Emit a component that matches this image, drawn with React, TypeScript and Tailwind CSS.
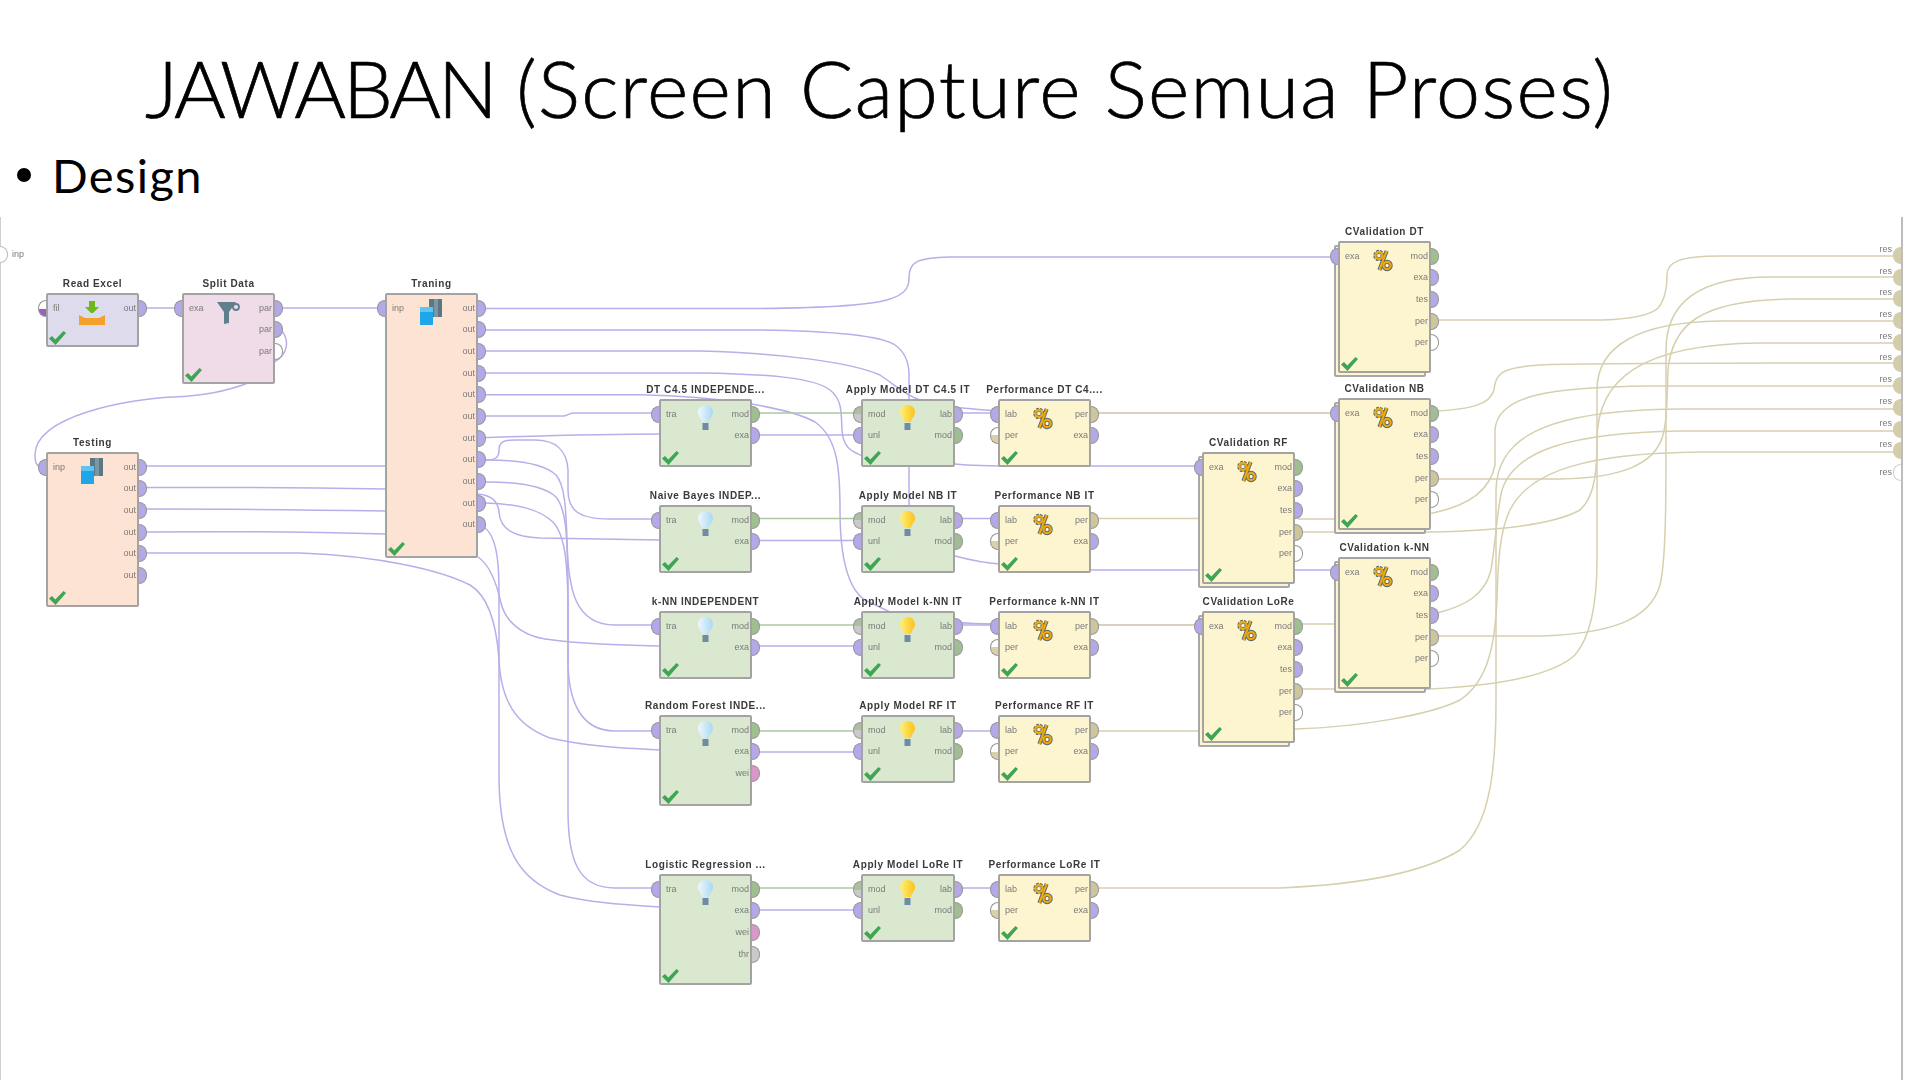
const TOP = 217;

type PortKind = "exa" | "mod" | "per" | "wei" | "thr" | "off" | "modIn" | "perIn" | "fil";

const portFill: Record<PortKind, string> = {
  exa: "bg-[#b5a8e8]",
  mod: "bg-[#9fbf90]",
  per: "bg-[#cdc59b]",
  wei: "bg-[#d898c8]",
  thr: "bg-[#cacaca]",
  off: "bg-white",
  modIn: "bg-[linear-gradient(#a9c29c_50%,#cacaca_50%)]",
  perIn: "bg-[linear-gradient(#ffffff_50%,#d9d0a6_50%)]",
  fil: "bg-[linear-gradient(#ffffff_55%,#9b5fc0_55%)]",
};

type PortDef = [string, PortKind];

interface OpProps {
  x: number;
  y: number;
  w?: number;
  h: number;
  title: string;
  tone: string;
  icon: React.ReactNode;
  ins: PortDef[];
  outs: PortDef[];
  stacked?: boolean;
}

function Check() {
  return (
    <svg className="absolute bottom-[0px] left-[1px]" width="17" height="14" viewBox="0 0 17 14">
      <polygon points="0,7.5 3,5 6.3,8.5 14.5,0 17,2 6.5,14" fill="#3da553" />
    </svg>
  );
}

function Bulb({ lit }: { lit?: boolean }) {
  const id = lit ? "bulb-lit" : "bulb-cold";
  return (
    <svg className="absolute left-[36px] top-[3px]" width="17" height="27" viewBox="0 0 17 27">
      <defs>
        <linearGradient id={id} x1="0" x2="1" y1="0" y2="0">
          <stop offset="0" stopColor={lit ? "#fff07a" : "#eef8fd"} />
          <stop offset="1" stopColor={lit ? "#fbc21a" : "#a9d8f3"} />
        </linearGradient>
      </defs>
      <path d="M8.5 1C4 1 1 4.2 1 8.2c0 3.2 2.2 5 3.2 7.2.4.9.6 1.6.8 2.6h7c.2-1 .4-1.7.8-2.6 1-2.2 3.2-4 3.2-7.2C16 4.2 13 1 8.5 1z" fill={`url(#${id})`} />
      <rect x="5.5" y="19" width="6" height="7" fill="#6f8ba5" />
    </svg>
  );
}

function Percent() {
  return (
    <svg className="absolute left-[33px] top-[6px]" width="20" height="23" viewBox="0 0 22 25">
      <g fill="none" stroke="#55666e" strokeWidth="4.4">
        <circle cx="6.5" cy="7" r="4" strokeDasharray="2.4 0.8" />
        <circle cx="15.5" cy="18" r="4" />
        <path d="M15 2 7 23" />
      </g>
      <g fill="none" stroke="#eea90f" strokeWidth="2.4">
        <circle cx="6.5" cy="7" r="4" />
        <circle cx="15.5" cy="18" r="4" />
        <path d="M15 2 7 23" />
      </g>
    </svg>
  );
}

function Multiply() {
  return (
    <svg className="absolute left-[32px] top-[4px]" width="24" height="26" viewBox="0 0 24 26">
      <path d="M10 0h13v18H10z" fill="#5b7785" />
      <path d="M15 0h4v18h-4z" fill="#7c96a3" />
      <path d="M1 8h13v18H1z" fill="#1fa6e8" />
      <path d="M1 8h13v5H1z" fill="#5cc5f2" />
    </svg>
  );
}

function Funnel() {
  return (
    <svg className="absolute left-[32px] top-[6px]" width="25" height="24" viewBox="0 0 25 24">
      <path d="M1 1h19l-7 10v11l-5 1V11z" fill="#5f7f8c" />
      <circle cx="20" cy="6" r="3" fill="none" stroke="#5f7f8c" strokeWidth="1.8" />
    </svg>
  );
}

function ImportIcon() {
  return (
    <svg className="absolute left-[31px] top-[6px]" width="26" height="25" viewBox="0 0 26 25">
      <path d="M10 0h6v6h4l-7 7-7-7h4z" fill="#6cb91c" />
      <path d="M4 12h18l2 3H2z" fill="#cfe3ea" />
      <path d="M0 14l6 3h14l6-3v10H0z" fill="#f4a02c" />
    </svg>
  );
}

function Op({ x, y, w = 93, h, title, tone, icon, ins, outs, stacked }: OpProps) {
  return (
    <div className="absolute" style={{ left: x - 1, top: y - TOP, width: w, height: h }}>
      {stacked && <div className={`absolute -bottom-[4px] -left-[4px] right-[5px] top-[4px] rounded-[2px] border-2 border-[#a8a8a8] ${tone}`} />}
      <div className={`absolute inset-0 rounded-[2px] border-2 border-[#a3a3a3] ${tone}`}>
        {icon}
        <Check />
      </div>
      <div className="absolute -top-[15px] left-1/2 -translate-x-1/2 whitespace-nowrap text-[10px] font-bold leading-[12px] tracking-[0.6px] text-[#3a3a3a]">
        {title}
      </div>
      <div className="absolute -left-[8px] top-[6.5px] flex flex-col gap-[4.7px]">
        {ins.map(([label, kind], i) => (
          <div key={i} className="flex h-[17px] items-center gap-[7px]">
            <div className={`h-[17px] w-[8px] rounded-l-full border-[1.5px] border-r-0 border-[#979797] ${portFill[kind]}`} />
            <span className="text-[9px] leading-[11px] text-[#7a7a7a]">{label}</span>
          </div>
        ))}
      </div>
      <div className="absolute -right-[8px] top-[6.5px] flex flex-col items-end gap-[4.7px]">
        {outs.map(([label, kind], i) => (
          <div key={i} className="flex h-[17px] items-center gap-[3px]">
            <span className="text-[9px] leading-[11px] text-[#7a7a7a]">{label}</span>
            <div className={`h-[17px] w-[8px] rounded-r-full border-[1.5px] border-l-0 border-[#979797] ${portFill[kind]}`} />
          </div>
        ))}
      </div>
    </div>
  );
}

const PURPLE = [
  "M146 308H175",
  "M282 308H378",
  "M281 330C290 340 288 355 274 362L248 383C225 392 200 396 173 397C130 399 35 415 35 455Q35 465 39 466",
  "M146 466H386",
  "M146 487.5C250 487 320 488 386 489",
  "M146 509C250 509 320 510 386 511",
  "M146 532C250 531 320 532 386 534",
  "M146 553H300C380 556 440 570 470 585C490 597 497 630 499 660C501 700 515 725 550 738C585 746 620 748 660 750",
  "M486 308.5H760C810 308 870 306 890 299C905 294 909 288 909 278C909 262 916 258 950 257H1336",
  "M486 330H760C830 331 880 335 895 345C905 352 909 362 909 375V520C909 545 940 553 955 556C970 560 985 563 1000 564C1040 570 1060 570 1090 570H1335",
  "M486 351H700C780 353 850 362 880 375C895 385 905 395 920 400L955 407C970 409 985 410 998 411",
  "M486 373H700C770 374 815 378 830 390C843 400 841 415 842 430C843 450 855 452 862 456L955 464C975 466 1000 466 1020 466H1196",
  "M486 394.7H640C720 396 790 408 815 422C838 438 840 470 840 510C840 565 850 590 865 600L890 612L955 622C970 624 985 624 998 624",
  "M486 416H564C568 416 568 413 574 413H652",
  "M486 437.5C540 436 600 434 660 434",
  "M486 460C495 460 499 458 499 450C499 443 502 440 515 440H535C555 440 567 450 568 470V490C568 510 578 519 610 519H652",
  "M486 460C520 460 545 465 556 475C565 485 566 510 567 540C568 590 575 625 615 625H652",
  "M486 482C520 482 545 487 556 497C567 510 567 540 568 580V660C568 700 580 731 615 731H652",
  "M486 503C520 504 540 510 553 522C565 535 567 560 568 600V810C568 860 578 888 615 888H652",
  "M478 494C490 495 498 500 499 512C500 530 515 537 540 538L660 540",
  "M484 527C495 535 499 555 499 590V780C500 850 520 880 560 895C590 903 630 905 660 907",
  "M478 557C490 565 497 585 501 603C505 620 520 635 545 639C580 644 620 645 660 646",
  "M757 435H854",
  "M757 540.5H854",
  "M757 646H854",
  "M757 752H854",
  "M757 910H854",
  "M962 413H998",
  "M962 518.5H998",
  "M962 625H998",
  "M962 731H998",
  "M962 888H998",
];

const GREEN = ["M757 413H854", "M757 518.5H854", "M757 625H854", "M757 731H854", "M757 888H854"];

const BROWN = ["M1097 413H1333", "M1097 625H1197"];

const TAN = [
  "M1097 518.5H1204",
  "M1298 519H1335L1433 513C1470 505 1490 490 1495 465V430C1497 395 1550 387 1650 386H1895",
  "M1302 624H1336",
  "M1437 320H1603C1630 319 1650 316 1658 308C1665 300 1667 290 1667 275C1667 262 1680 256 1720 256H1895",
  "M1437 636H1540C1610 634 1650 620 1660 585C1666 560 1666 500 1666 440V350C1666 310 1690 277 1770 277H1895",
  "M1437 479H1560C1620 478 1655 465 1663 435C1667 420 1667 400 1668 370C1672 325 1700 300 1790 299H1895",
  "M1302 532H1430C1480 531 1550 527 1580 510C1595 497 1597 470 1597 440V390C1597 345 1640 322 1720 321H1895",
  "M1302 689H1430C1490 686 1550 678 1575 655C1592 635 1597 600 1597 560V440C1597 380 1640 344 1760 343H1895",
  "M1437 411C1470 409 1490 405 1494 390C1495 375 1500 367 1540 365C1580 363 1700 363 1895 363",
  "M1097 888H1280C1350 885 1420 875 1460 850C1490 825 1496 770 1496 700V490C1497 440 1540 410 1680 409H1895",
  "M1437 613C1465 606 1485 595 1491 570C1496 540 1497 510 1502 490C1515 450 1570 433 1680 431H1895",
  "M1097 731H1200L1295 729C1360 727 1430 715 1460 700C1490 680 1495 640 1497 600C1498 560 1500 530 1510 510C1530 470 1590 453 1700 452H1895",
];

const RES_PORTS = Array.from({ length: 10 }, (_, i) => i);

const GREEN_BOX = "bg-[#d9e8cf]";
const YELLOW_BOX = "bg-[#fdf5d0]";
const PEACH_BOX = "bg-[#fde3d4]";

const elevenOuts: PortDef[] = Array.from({ length: 11 }, () => ["out", "exa"]);
const sixOuts: PortDef[] = Array.from({ length: 6 }, () => ["out", "exa"]);
const applyIns: PortDef[] = [["mod", "modIn"], ["unl", "exa"]];
const applyOuts: PortDef[] = [["lab", "exa"], ["mod", "mod"]];
const perfIns: PortDef[] = [["lab", "exa"], ["per", "perIn"]];
const perfOuts: PortDef[] = [["per", "per"], ["exa", "exa"]];
const cvOuts: PortDef[] = [["mod", "mod"], ["exa", "exa"], ["tes", "exa"], ["per", "per"], ["per", "off"]];

const rows = [
  { y: 400, train: "DT C4.5 INDEPENDE...", apply: "Apply Model DT C4.5 IT", perf: "Performance DT C4....", h: 68, extra: [] as PortDef[] },
  { y: 506, train: "Naive Bayes INDEP...", apply: "Apply Model NB IT", perf: "Performance NB IT", h: 68, extra: [] as PortDef[] },
  { y: 612, train: "k-NN INDEPENDENT", apply: "Apply Model k-NN IT", perf: "Performance k-NN IT", h: 68, extra: [] as PortDef[] },
  { y: 716, train: "Random Forest INDE...", apply: "Apply Model RF IT", perf: "Performance RF IT", h: 91, extra: [["wei", "wei"]] as PortDef[] },
  { y: 875, train: "Logistic Regression ...", apply: "Apply Model LoRe IT", perf: "Performance LoRe IT", h: 111, extra: [["wei", "wei"], ["thr", "thr"]] as PortDef[] },
];

const validations = [
  { x: 1338, y: 241, title: "CValidation DT" },
  { x: 1338, y: 398, title: "CValidation NB" },
  { x: 1338, y: 557, title: "CValidation k-NN" },
  { x: 1202, y: 452, title: "CValidation RF" },
  { x: 1202, y: 611, title: "CValidation LoRe" },
];

function Wires({ paths, color }: { paths: string[]; color: string }) {
  return (
    <g fill="none" stroke={color} strokeWidth="1.5">
      {paths.map((d, i) => (
        <path key={i} d={d} />
      ))}
    </g>
  );
}

export default function App() {
  return (
    <div className="h-[1080px] w-[1920px] overflow-hidden bg-white font-['Liberation_Sans',sans-serif]">
      <header className="h-[217px] text-black">
        <h1 className="pl-[145px] pt-[40px] font-['Lato',sans-serif] text-[79px] font-light leading-[96px] [-webkit-text-stroke:0.7px_black]">
          <span className="tracking-[-3px]">JAWABAN</span>{" "}
          <span className="tracking-[1.4px]">(Screen Capture Semua Proses)</span>
        </h1>
        <div className="mt-[11px] flex items-center gap-[21px] pl-[17px] font-['Lato',sans-serif] text-[47px] leading-[56px] tracking-[1.4px]">
          <span className="h-[14px] w-[14px] rounded-full bg-black" />
          <span>Design</span>
        </div>
      </header>

      <main className="relative h-[863px] w-[1903px] border-l border-r-2 border-l-[#cfcfcf] border-r-[#bdbdbd] blur-[0.45px]">
        <svg className="absolute left-[-1px] top-0 h-[863px] w-[1920px]" viewBox={`0 ${TOP} 1920 863`}>
          <Wires paths={PURPLE} color="#b9aeea" />
          <Wires paths={GREEN} color="#aac9a0" />
          <Wires paths={BROWN} color="#cdc0aa" />
          <Wires paths={TAN} color="#d6d0ae" />
        </svg>

        <div className="absolute left-[-1px] top-[29px] flex h-[17px] items-center gap-[4px]">
          <div className="h-[17px] w-[8px] rounded-r-full border-[1.5px] border-l-0 border-[#bcbcbc] bg-white" />
          <span className="text-[9px] leading-[11px] text-[#7a7a7a]">inp</span>
        </div>

        <Op x={46} y={293} h={54} title="Read Excel" tone="bg-[#dedcec]" icon={<ImportIcon />} ins={[["fil", "fil"]]} outs={[["out", "exa"]]} />
        <Op x={182} y={293} h={91} title="Split Data" tone="bg-[#f0dbe8]" icon={<Funnel />} ins={[["exa", "exa"]]} outs={[["par", "exa"], ["par", "exa"], ["par", "off"]]} />
        <Op x={385} y={293} h={265} title="Traning" tone={PEACH_BOX} icon={<Multiply />} ins={[["inp", "exa"]]} outs={elevenOuts} />
        <Op x={46} y={452} h={155} title="Testing" tone={PEACH_BOX} icon={<Multiply />} ins={[["inp", "exa"]]} outs={sixOuts} />

        {rows.map((r) => (
          <div key={r.train}>
            <Op x={659} y={r.y - 1} h={r.h} title={r.train} tone={GREEN_BOX} icon={<Bulb />} ins={[["tra", "exa"]]} outs={[["mod", "mod"], ["exa", "exa"], ...r.extra]} />
            <Op x={861} y={r.y - 1} h={68} w={94} title={r.apply} tone={GREEN_BOX} icon={<Bulb lit />} ins={applyIns} outs={applyOuts} />
            <Op x={998} y={r.y - 1} h={68} title={r.perf} tone={YELLOW_BOX} icon={<Percent />} ins={perfIns} outs={perfOuts} />
          </div>
        ))}

        {validations.map((v) => (
          <Op key={v.title} x={v.x} y={v.y} h={132} title={v.title} tone={YELLOW_BOX} icon={<Percent />} ins={[["exa", "exa"]]} outs={cvOuts} stacked />
        ))}

        <div className="absolute right-0 top-[30px] flex flex-col items-end gap-[4.7px]">
          {RES_PORTS.map((i) => (
            <div key={i} className="flex h-[17px] gap-[1px]">
              <span className="-translate-y-[3px] text-[9px] leading-[11px] text-[#7a7a7a]">res</span>
              <div className="h-[17px] w-[8px] rounded-l-full bg-[#d3cdaa]" />
            </div>
          ))}
          <div className="flex h-[17px] items-center gap-[1px]">
            <span className="text-[9px] leading-[11px] text-[#7a7a7a]">res</span>
            <div className="h-[17px] w-[8px] rounded-l-full border-[1.5px] border-r-0 border-[#d0d0d0] bg-white" />
          </div>
        </div>
      </main>
    </div>
  );
}
